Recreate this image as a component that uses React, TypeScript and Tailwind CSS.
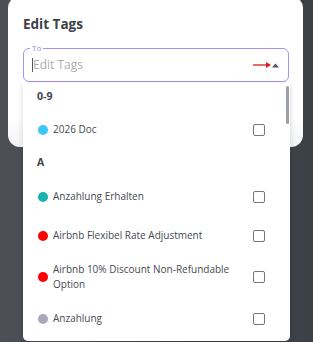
import React from 'react';

interface Tag {
    label: string;
    color: string;
}

const GROUPS: { title: string; tags: Tag[] }[] = [
    { title: '0-9', tags: [{ label: '2026 Doc', color: '#3ec6fb' }] },
    {
        title: 'A',
        tags: [
            { label: 'Anzahlung Erhalten', color: '#17b3ad' },
            { label: 'Airbnb Flexibel Rate Adjustment', color: '#ff0000' },
            { label: 'Airbnb 10% Discount Non-Refundable Option', color: '#ff0000' },
            { label: 'Anzahlung', color: '#a8a9bb' },
        ],
    },
];

const font = { fontFamily: '"Open Sans", "Liberation Sans", sans-serif' };

export default function App() {
    return (
        <div className="relative w-[313px] h-[342px] overflow-hidden bg-gradient-to-r from-[#4c4f56] to-[#3c4047]" style={font}>
            {/* modal card */}
            <div className="absolute left-[8px] top-[-4px] w-[295px] h-[151px] rounded-[12px] bg-gradient-to-b from-white from-80% to-[#f3f4f6]">
                <p className="mt-[18px] ml-[15px] text-[13.5px] font-bold text-[#3d4148]">Edit Tags</p>
                <div className="relative mt-[14px] ml-[15px] w-[266px] h-[34px] rounded-[6px] border border-[#a990f5] flex items-center pl-[8px]">
                    <span className="absolute -top-[7px] left-[6px] px-[2px] bg-white text-[8px] leading-[12px] text-[#9a86ee]">To</span>
                    <span className="w-px h-[14px] bg-[#555]" />
                    <span className="text-[12px] text-[#a9acb3]">Edit Tags</span>
                    <div className="ml-auto mr-[9px] flex items-center">
                        <svg width="20" height="8" viewBox="0 0 20 8">
                            <line x1="0" y1="4" x2="15" y2="4" stroke="#e11d1d" strokeWidth="1.3" />
                            <path d="M13 1 L18 4 L13 7 Z" fill="#e11d1d" />
                        </svg>
                        <svg width="7" height="5" viewBox="0 0 7 5" className="-ml-[1px]">
                            <path d="M0 4.5 L3.5 0.5 L7 4.5 Z" fill="#555a61" />
                        </svg>
                    </div>
                </div>
            </div>

            {/* dropdown list */}
            <div className="absolute left-[23px] top-[83px] w-[267px] h-[258px] rounded-b-[5px] bg-white shadow-[0_2px_6px_rgba(0,0,0,0.15)]">
                <div className="absolute right-[1px] top-[3px] w-[3px] h-[38px] rounded-full bg-[#9aa0a8]" />
                {GROUPS.map((g, i) => (
                    <div key={g.title}>
                        <p className={`${i === 0 ? 'h-[27px] pt-[1px]' : 'h-[28px]'} pl-[14px] flex items-center text-[10.5px] font-bold text-[#40444b]`}>{g.title}</p>
                        {g.tags.map((t) => (
                            <div key={t.label} className="flex items-center min-h-[39px] py-[7px] pl-[15px] pr-[25px]">
                                <span className="w-[10px] h-[10px] rounded-full shrink-0" style={{ background: t.color }} />
                                <span className="ml-[5px] w-[180px] text-[10px] leading-[15px] font-medium text-[#464a51]">{t.label}</span>
                                <span className="ml-auto w-[12px] h-[12px] rounded-[2px] border-[1.5px] border-[#6f7681]" />
                            </div>
                        ))}
                    </div>
                ))}
            </div>
        </div>
    );
}
